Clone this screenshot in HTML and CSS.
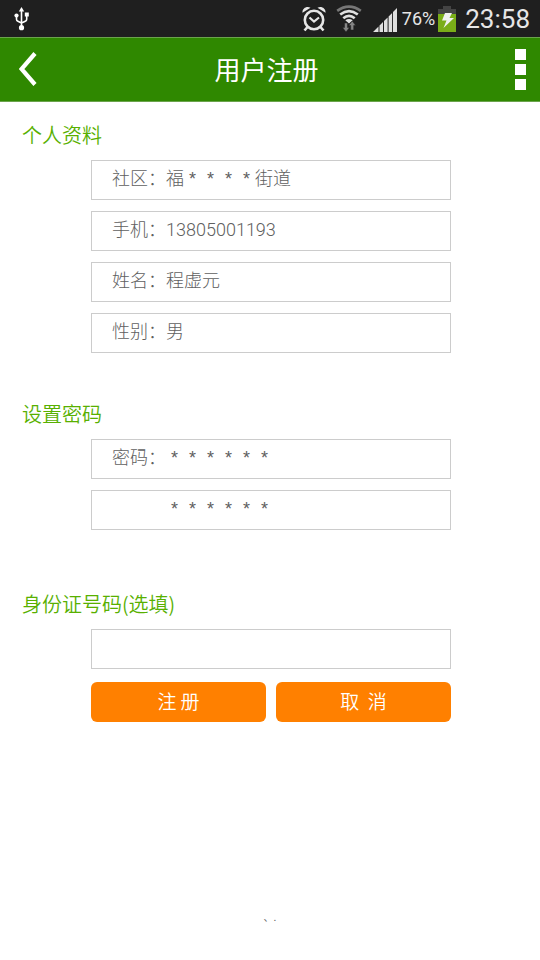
FILE: index.html
```html
<!DOCTYPE html>
<html lang="zh-CN">
<head>
<meta charset="utf-8">
<meta name="viewport" content="width=device-width, initial-scale=1">
<title>用户注册</title>
<link rel="stylesheet" href="styles.css">
</head>
<body>
<div class="status">
  <svg class="usb" width="16" height="24" viewBox="0 0 16 24" aria-hidden="true">
    <g fill="none" stroke="#fff" stroke-width="1.6"><path d="M7.5 3V20M2.5 9v3.2q0 1.4 1.4 2L7.5 16M12.7 8v4.2q0 1.4-1.4 2L7.500 16"/></g>
    <g fill="#fff"><path d="M7.500 0l2.700 4.500h-5.400z"/><circle cx="2.500" cy="8.500" r="2.100"/><path d="M10.800 5.500h4v4h-4z"/><circle cx="7.500" cy="20.700" r="2.600"/></g>
  </svg>
  <div class="status-right">
    <svg class="alarm" width="24" height="26" viewBox="0 0 24 26" aria-hidden="true">
      <g fill="none" stroke="#e6e6e6" stroke-width="2.600"><circle cx="12" cy="14" r="9.200"/><path d="M7.500 11.500l4.500 4 5-4" stroke-width="2.200"/><path d="M5.500 21l-3 3.500M18.500 21l3 3.500"/></g>
      <path d="M.5 6.800C0 2.500 4.500-.5 8.500 1.700zM23.500 6.800C24 2.500 19.500-.5 15.500 1.700z" fill="#e6e6e6"/>
    </svg>
    <svg class="wifi" width="26" height="27" viewBox="0 0 26 27" aria-hidden="true">
      <g fill="none" stroke-width="2.700"><path d="M1.200 5.800Q13-2.600 24.800 5.800" stroke="#777"/><path d="M4.200 9.500Q13 2.700 21.800 9.500M7.300 13.200Q13 8.500 18.700 13.200" stroke="#e0e0e0"/></g>
      <path d="M9.300 15.200Q13 12.600 16.700 15.200L13 18.500z" fill="#e0e0e0"/>
      <path d="M8.500 18h3v4.500h2L10 27l-3.500-4.500h2zM14.700 25v-4.500h-2l3.500-4.500 3.500 4.500h-2V25z" fill="#858585" stroke="#1f1f1f" stroke-width=".5"/>
    </svg>
    <svg class="signal" width="24" height="24" viewBox="0 0 24 24" aria-hidden="true">
      <path d="M0 24L5.500 18.500V24zM6.500 17.500L10 14V24H6.500zM11 13l3.600-3.600V24H11zM15.600 8.400l3.500-3.500V24h-3.500zM20 4l4-4v24h-4z" fill="#e0e0e0"/>
    </svg>
    <span class="percent">76%</span>
    <svg class="battery" width="18" height="26" viewBox="0 0 18 26" aria-hidden="true">
      <path d="M5 0h8v3h5v5H0V3h5z" fill="#444"/><path d="M0 8h18v18H0z" fill="#7aad18"/>
      <path d="M7 7h7l-2.500 5H16L5.500 22l3-7.500H4z" fill="#f0f0f0"/>
    </svg>
    <time class="clock">23:58</time>
  </div>
</div>
<header class="bar">
  <button class="bar-button back" type="button" aria-label="返回">
    <svg width="18" height="34" viewBox="0 0 18 34" aria-hidden="true"><path d="M16 1.500L2.500 17 16 32.500" fill="none" stroke="#fff" stroke-width="4.200"/></svg>
  </button>
  <h1 class="title">用户注册</h1>
  <button class="bar-button more" type="button" aria-label="更多">
    <svg width="11" height="41" viewBox="0 0 11 41" aria-hidden="true"><path d="M0 0h11v11H0zM0 15h11v11H0zM0 30h11v11H0z" fill="#fff"/></svg>
  </button>
</header>
<main>
  <form class="form">
    <section class="group">
      <h2 class="heading">个人资料</h2>
      <div class="fields">
        <div class="field"><label for="community">社区：</label><input id="community" type="text" value="福 * &#x2004;* &#x2004;* &#x2004;* 街道"></div>
        <div class="field"><label for="phone">手机：</label><input class="digits" id="phone" type="tel" value="13805001193"></div>
        <div class="field"><label for="name">姓名：</label><input id="name" type="text" value="程虚元"></div>
        <div class="field"><label for="gender">性别：</label><input id="gender" type="text" value="男"></div>
      </div>
    </section>
    <section class="group">
      <h2 class="heading">设置密码</h2>
      <div class="fields">
        <div class="field"><label for="password">密码：</label><input id="password" type="text" value=" * &#x2004;* &#x2004;* &#x2004;* &#x2004;* &#x2004;*"></div>
        <div class="field"><label for="confirm"></label><input id="confirm" type="text" aria-label="密码" value=" * &#x2004;* &#x2004;* &#x2004;* &#x2004;* &#x2004;*"></div>
      </div>
    </section>
    <section class="group">
      <h2 class="heading"><label for="idcard">身份证号码(选填)</label></h2>
      <div class="fields">
        <div class="field"><input id="idcard" type="text"></div>
        <div class="actions">
          <button class="action" type="submit">注 册</button>
          <button class="action" type="button">取  消</button>
        </div>
      </div>
    </section>
  </form>
</main>
<footer class="foot">、.</footer>
</body>
</html>
```
FILE: styles.css
```css
* {
  box-sizing: border-box;
}

body {
  margin: 0;
  min-height: 100vh;
  display: flex;
  flex-direction: column;
  background: #fff;
  color: #606060;
  font-family: "Noto Sans CJK SC", sans-serif;
}

main {
  flex: 1;
}

.status {
  display: flex;
  align-items: center;
  justify-content: space-between;
  height: 37px;
  padding: 0 10px 0 14px;
  background: #1f1f1f;
  color: #e6e6e6;
  font-family: Roboto, sans-serif;
}

.status-right {
  display: flex;
  align-items: center;
}

.alarm {
  margin-right: 10px;
}

.wifi {
  margin-right: 11px;
}

.signal {
  margin: 3px 5px 0 0;
}

.percent {
  margin-right: 3px;
  font-size: 18px;
  line-height: 24px;
}

.battery {
  margin-right: 9px;
}

.clock {
  font-size: 26px;
  line-height: 36px;
}

.bar {
  display: grid;
  grid-template-columns: 60px 1fr 72px;
  align-items: center;
  height: 65px;
  padding: 0 14px 1px 19px;
  border-top: 1px solid #6ba44c;
  border-bottom: 1px solid #6ba44c;
  background: #2f8800;
}

.bar-button {
  display: flex;
  padding: 0;
  border: 0;
  background: none;
}

.more {
  justify-self: end;
}

.title {
  margin: 0;
  color: #fff;
  font-size: 26px;
  font-weight: 400;
  line-height: 36px;
  text-align: center;
}

.form {
  padding: 19px 0 0;
}

.group + .group {
  margin-top: 47px;
}

.group:last-child {
  margin-top: 60px;
}

.heading {
  margin: 0 22px 11px;
  color: #58b000;
  font-size: 20px;
  font-weight: 350;
  line-height: 28px;
}

.fields {
  display: grid;
  gap: 11px;
  margin: 0 89px 0 91px;
}

.field {
  display: flex;
  align-items: center;
  height: 40px;
  padding: 0 20px 2px;
  border: 1px solid #ccc;
  font-family: "Liberation Sans", "Noto Sans CJK SC", sans-serif;
  font-size: 18px;
  font-weight: 300;
  line-height: 26px;
}

.field label {
  flex: none;
  width: 54px;
}

.field input {
  flex: 1;
  min-width: 0;
  padding: 0;
  border: 0;
  outline: 0;
  background: none;
  color: inherit;
  font: inherit;
}

.field .digits {
  font-family: Roboto, sans-serif;
}

.actions {
  display: grid;
  grid-template-columns: 1fr 1fr;
  gap: 10px;
  margin-top: 2px;
}

.action {
  height: 40px;
  padding: 0 0 3px;
  border: 0;
  border-radius: 6px;
  background: #ff8000;
  color: #fff;
  font-family: inherit;
  font-size: 19px;
  font-weight: 350;
  line-height: 28px;
  white-space: pre;
}

.foot {
  padding-bottom: 36px;
  font-size: 10px;
  line-height: 14px;
  text-align: center;
}
```
